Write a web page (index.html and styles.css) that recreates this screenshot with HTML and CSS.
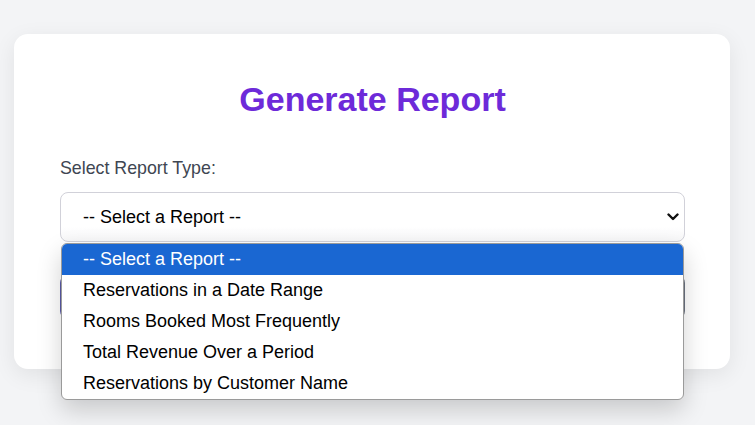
FILE: index.html
```html
<!DOCTYPE html>
<html lang="en">
<head>
<meta charset="utf-8">
<title>Generate Report</title>
<link rel="stylesheet" href="styles.css">
</head>
<body>
<div class="page">
  <main class="card">
    <h1 class="title">Generate Report</h1>
    <form class="form">
      <label class="label" for="reportType">Select Report Type:</label>
      <div class="field">
        <div class="select" id="reportType" role="combobox" aria-expanded="true">
          <span class="select-value">-- Select a Report --</span>
          <svg class="chevron" width="12" height="8" viewBox="0 0 12 8" aria-hidden="true">
            <polyline points="1.5,1.5 6,6 10.5,1.5" fill="none" stroke="#111" stroke-width="2.4" stroke-linecap="round" stroke-linejoin="round"/>
          </svg>
        </div>
        <ul class="options" role="listbox">
          <li class="option selected">-- Select a Report --</li>
          <li class="option">Reservations in a Date Range</li>
          <li class="option">Rooms Booked Most Frequently</li>
          <li class="option">Total Revenue Over a Period</li>
          <li class="option">Reservations by Customer Name</li>
        </ul>
      </div>
      <button class="submit" type="button">Generate</button>
    </form>
  </main>
</div>
</body>
</html>
```
FILE: styles.css
```css
* { box-sizing: border-box; }

html, body {
  margin: 0;
  padding: 0;
  background: #f3f4f6;
  font-family: "Liberation Sans", Arial, sans-serif;
}

.page {
  min-height: 425px;
  padding: 34px 25px 0 14px;
}

.card {
  background: #ffffff;
  border-radius: 14px;
  box-shadow: 0 6px 22px rgba(0, 0, 0, 0.08);
  padding: 46px 45px 50px 46px;
}

.title {
  margin: 0;
  text-align: center;
  font-size: 34px;
  font-weight: 700;
  line-height: 39px;
  color: #6d2ad9;
}

.form {
  display: flex;
  flex-direction: column;
  margin-top: 39px;
}

.label {
  font-size: 17.8px;
  line-height: 21px;
  color: #404652;
}

.field {
  position: relative;
  margin-top: 13px;
}

.select {
  height: 50px;
  border: 1px solid #d1d1d9;
  border-radius: 8px;
  background: linear-gradient(#ffffff 70%, #f7f7f8);
  display: flex;
  align-items: center;
  justify-content: space-between;
  padding: 0 5px 0 22px;
  font-size: 18px;
  color: #000;
}

.chevron {
  display: block;
}

.options {
  position: absolute;
  top: calc(100% + 1px);
  left: 1px;
  right: 1px;
  margin: 0;
  padding: 0;
  list-style: none;
  background: #ffffff;
  border: 1px solid #9a9a9a;
  border-radius: 6px;
  overflow: hidden;
  box-shadow: 0 10px 24px rgba(0, 0, 0, 0.18);
  z-index: 2;
}

.option {
  height: 31px;
  display: flex;
  align-items: center;
  padding-left: 21px;
  font-size: 18px;
  color: #000;
}

.option.selected {
  background: #1a67d2;
  color: #ffffff;
}

.submit {
  margin-top: 33px;
  height: 44px;
  border: none;
  border-radius: 8px;
  background: linear-gradient(90deg, #5a5aa8, #6b7280);
  color: #fff;
  font-family: inherit;
  font-size: 18px;
  font-weight: 700;
}
```
